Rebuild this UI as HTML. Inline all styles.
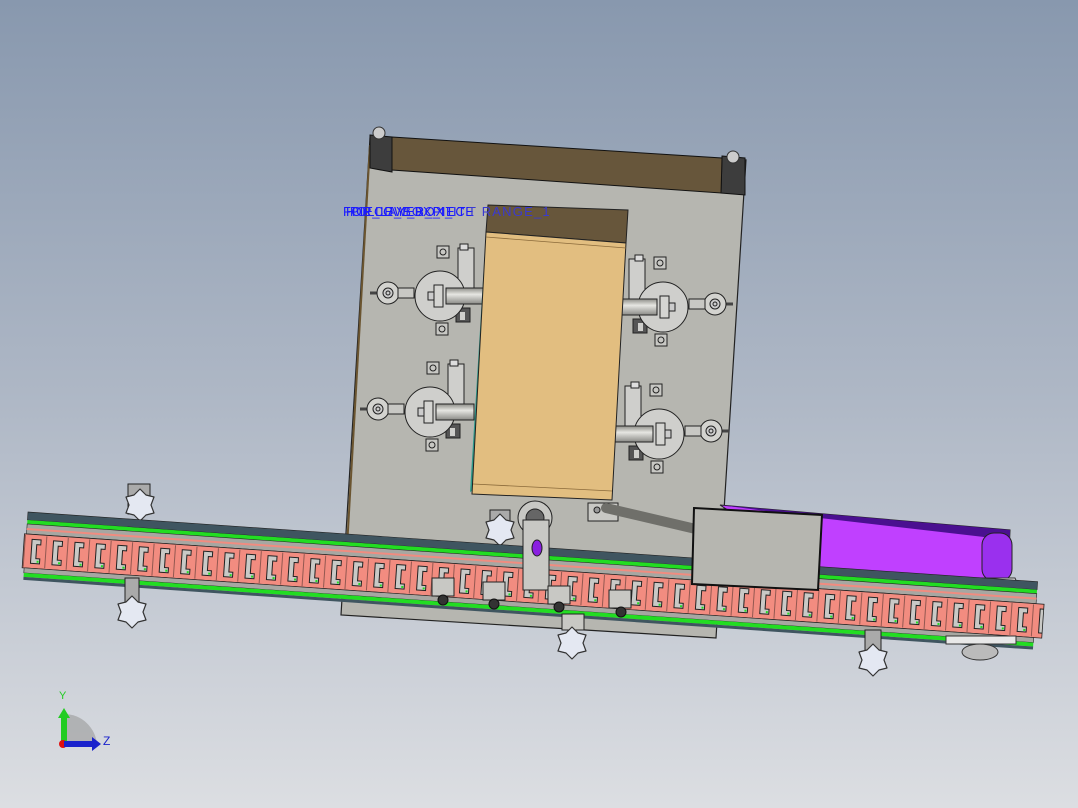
<!DOCTYPE html>
<html><head><meta charset="utf-8"><style>
html,body{margin:0;padding:0;width:1078px;height:808px;overflow:hidden}
svg{display:block}
</style></head><body>
<svg width="1078" height="808" viewBox="0 0 1078 808" xmlns="http://www.w3.org/2000/svg">
<defs>
<linearGradient id="bg" x1="0" y1="0" x2="0" y2="1">
<stop offset="0" stop-color="#8898ae"/><stop offset="0.5" stop-color="#afb8c6"/><stop offset="1" stop-color="#dcdee2"/>
</linearGradient>
<linearGradient id="rod" x1="0" y1="0" x2="0" y2="1">
<stop offset="0" stop-color="#8d8d88"/><stop offset="0.4" stop-color="#e6e6e2"/><stop offset="1" stop-color="#8a8a86"/>
</linearGradient>
<pattern id="links" x="28" y="534" width="21.5" height="34" patternUnits="userSpaceOnUse">
<rect x="0" y="0" width="21.5" height="34" fill="#f28c80"/>
<path d="M6 5 h9 v5 h-4 v14 h4 v5 h-9 z" fill="#c9c9c6" stroke="#222" stroke-width="1"/>
<line x1="20.5" y1="1" x2="20.5" y2="33" stroke="#7a4a44" stroke-width="0.8"/>
<rect x="12" y="26" width="2" height="2" fill="#22dd22"/>
</pattern>
<g id="knob">
<polygon points="0,-16 6,-10 14,-8 11,0 14,8 6,10 0,16 -6,10 -14,8 -11,0 -14,-8 -6,-10" fill="#e4e8f2" stroke="#333" stroke-width="1.2" stroke-linejoin="round"/>
</g>
<g id="asm">
<rect x="-6" y="-8" width="10" height="10" fill="#c8c8c4" stroke="#222"/>
<rect x="-3" y="-50" width="12" height="12" fill="#c8c8c4" stroke="#222"/>
<circle cx="3" cy="-44" r="3" fill="none" stroke="#222"/>
<rect x="-4" y="27" width="12" height="12" fill="#c8c8c4" stroke="#222"/>
<circle cx="2" cy="33" r="3" fill="none" stroke="#222"/>
<rect x="18" y="-48" width="16" height="44" fill="#cfcfcc" stroke="#222"/>
<rect x="20" y="-52" width="8" height="6" fill="#ddd" stroke="#222"/>
<rect x="16" y="12" width="14" height="14" fill="#555" stroke="#222"/>
<rect x="20" y="16" width="5" height="8" fill="#cfcfcc"/>
<line x1="-70" y1="-3" x2="-50" y2="-3" stroke="#444" stroke-width="3"/>
<circle cx="-52" cy="-3" r="11" fill="#d3d3cf" stroke="#222"/>
<circle cx="-52" cy="-3" r="5" fill="#ccc" stroke="#222"/>
<circle cx="-52" cy="-3" r="2" fill="none" stroke="#222"/>
<rect x="-42" y="-8" width="16" height="10" fill="#c8c8c4" stroke="#222"/>
<circle cx="0" cy="0" r="25" fill="#cfcfcc" stroke="#222"/>
<rect x="-12" y="-4" width="14" height="8" fill="#ccc" stroke="#222"/>
<rect x="-6" y="-11" width="9" height="22" fill="#d5d5d2" stroke="#222"/>
<rect x="6" y="-8" width="38" height="16" fill="url(#rod)" stroke="#222"/>
</g>
</defs>
<rect width="1078" height="808" fill="url(#bg)"/>

<!-- plate -->
<polygon points="370,138 746,160 716,638 341,615" fill="#b6b6b0" stroke="#222" stroke-width="1.2"/>
<line x1="370" y1="145" x2="344" y2="600" stroke="#6b5530" stroke-width="2"/>
<polygon points="370,135 392,137 392,172 370,168" fill="#3d3d3d" stroke="#111"/>
<polygon points="722,156 745,158 745,195 721,193" fill="#3d3d3d" stroke="#111"/>
<polygon points="392,137 722,158 721,193 392,170" fill="#67563b" stroke="#111"/>
<circle cx="379" cy="133" r="6" fill="#ccc" stroke="#333"/>
<circle cx="733" cy="157" r="6" fill="#ccc" stroke="#333"/>

<use href="#asm" transform="translate(440,296)"/>
<use href="#asm" transform="translate(430,412)"/>
<use href="#asm" transform="translate(663,307) scale(-1,1)"/>
<use href="#asm" transform="translate(659,434) scale(-1,1)"/>

<polygon points="486,232 488,440 474,490 470,492" fill="#2e9a8a"/>
<polygon points="488,205 628,210 626,243 486,232" fill="#67563b" stroke="#222"/>
<polygon points="486,232 626,243 612,500 472,494" fill="#e2be80" stroke="#222"/>
<line x1="486" y1="237" x2="626" y2="248" stroke="#8a6a3a" stroke-width="0.8"/>
<line x1="473" y1="484" x2="612" y2="491" stroke="#8a6a3a" stroke-width="0.8"/>

<g font-family="Liberation Sans, sans-serif" font-size="13" fill="#1a1aff">
<text x="343" y="216" letter-spacing="0.6">FOR_LAYER_PIECE</text>
<text x="346" y="216" letter-spacing="0.8">HOLLOW_BOX_IT</text>
<text x="350" y="216" letter-spacing="1">PIECE_BOX_IT</text>
<text x="468" y="216" fill="#3a3ad0" letter-spacing="1.2">T RANGE_1</text>
</g>

<rect x="588" y="503" width="30" height="18" fill="#c8c8c4" stroke="#222"/>
<circle cx="597" cy="510" r="3" fill="#999" stroke="#222"/>
<line x1="606" y1="508" x2="700" y2="530" stroke="#6f6f6a" stroke-width="10" stroke-linecap="round"/>
<circle cx="535" cy="518" r="17" fill="#c8c8c4" stroke="#222"/>
<circle cx="535" cy="518" r="9" fill="#666" stroke="#222"/>

<rect x="128" y="484" width="22" height="30" fill="#aaa" stroke="#222"/>
<use href="#knob" transform="translate(140,505)"/>
<rect x="490" y="510" width="20" height="20" fill="#aaa" stroke="#222"/>
<use href="#knob" transform="translate(500,530)"/>

<polygon points="720,505 1010,530 1008,582 820,570" fill="#c040ff" stroke="#222"/>
<polygon points="720,505 1010,530 1010,540 820,518" fill="#4a1090"/>
<rect x="982" y="533" width="30" height="48" rx="12" fill="#9a30ee" stroke="#222"/>
<polygon points="950,578 1015,578 1018,585 952,585" fill="#e8e8e8" stroke="#333"/>

<g transform="rotate(3.95 28 512)">
<rect x="28" y="512" width="1012" height="8" fill="#3f5560" stroke="#222" stroke-width="0.6"/>
<rect x="28" y="520" width="1012" height="4" fill="#22dd22"/>
<rect x="28" y="524" width="1012" height="10" fill="#a7a7a2" stroke="#222" stroke-width="0.6"/>
<rect x="28" y="528" width="1012" height="2" fill="#f08c80"/>
<rect x="26" y="534" width="1022" height="34" fill="url(#links)" stroke="#222" stroke-width="0.8"/>
<rect x="28" y="568" width="1012" height="5" fill="#a7a7a2" stroke="#222" stroke-width="0.6"/>
<rect x="28" y="573" width="1012" height="4" fill="#22dd22"/>
<rect x="28" y="577" width="1012" height="3" fill="#3f5560"/>
</g>

<rect x="523" y="520" width="26" height="70" fill="#c8c8c4" stroke="#222"/>
<ellipse cx="537" cy="548" rx="5" ry="8" fill="#8a20e0" stroke="#222"/>
<g fill="#c8c8c4" stroke="#222">
<rect x="432" y="578" width="22" height="18"/><rect x="483" y="582" width="22" height="18"/>
<rect x="548" y="586" width="22" height="18"/><rect x="609" y="590" width="22" height="18"/>
</g>
<g fill="#333" stroke="#111">
<circle cx="443" cy="600" r="5"/><circle cx="494" cy="604" r="5"/><circle cx="559" cy="607" r="5"/><circle cx="621" cy="612" r="5"/>
</g>

<polygon points="694,508 822,515 818,590 692,584" fill="#b6b6b0" stroke="#111" stroke-width="2"/>

<rect x="125" y="578" width="14" height="26" fill="#aaa" stroke="#222"/>
<use href="#knob" transform="translate(132,612)"/>
<rect x="562" y="614" width="22" height="16" fill="#c8c8c4" stroke="#222"/>
<use href="#knob" transform="translate(572,643)"/>
<rect x="865" y="630" width="16" height="24" fill="#aaa" stroke="#222"/>
<use href="#knob" transform="translate(873,660)"/>
<ellipse cx="980" cy="652" rx="18" ry="8" fill="#bbb" stroke="#333"/>
<rect x="946" y="636" width="70" height="8" fill="#e8e8e8" stroke="#333"/>

<path d="M64 745 L64 714 A33 33 0 0 1 97 745 Z" fill="#999" opacity="0.6"/>
<rect x="61" y="716" width="6" height="30" fill="#22cc22"/>
<polygon points="58,718 64,708 70,718" fill="#22cc22"/>
<circle cx="63" cy="744" r="4" fill="#e01010"/>
<rect x="64" y="741" width="30" height="6" fill="#1a22cc"/>
<polygon points="92,737 101,744 92,751" fill="#1a22cc"/>
<text x="59" y="699" font-family="Liberation Sans, sans-serif" font-size="11" fill="#22cc22">Y</text>
<text x="103" y="745" font-family="Liberation Sans, sans-serif" font-size="12" fill="#1a22cc">Z</text>
</svg>
</body></html>
